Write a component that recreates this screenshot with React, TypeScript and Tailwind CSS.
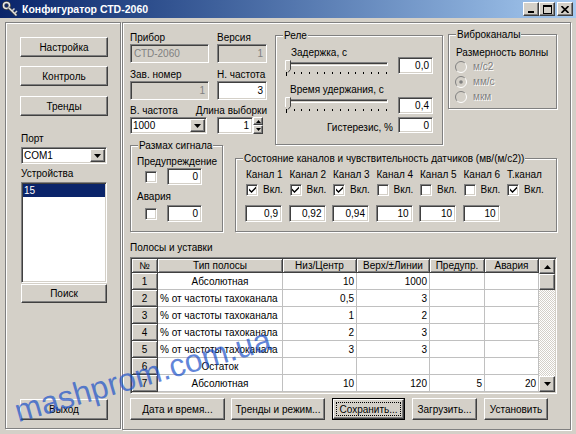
import React from "react";

const raised =
  "border border-t-white border-l-white border-r-[#404040] border-b-[#404040] shadow-[inset_-1px_-1px_0_#808080]";
const sunken =
  "border border-t-[#808080] border-l-[#808080] border-r-white border-b-white shadow-[inset_1px_1px_0_#404040,inset_-1px_-1px_0_#d4d0c8]";
const etched = "border border-[#808080] shadow-[inset_1px_1px_0_#fff,1px_1px_0_#fff]";

function Button({ children, className = "" }: { children: React.ReactNode; className?: string }) {
  return <div className={`${raised} flex items-center justify-center bg-[#d4d0c8] ${className}`}>{children}</div>;
}

function FocusButton({ children, className = "" }: { children: React.ReactNode; className?: string }) {
  return (
    <div className={`border border-black ${className}`}>
      <div className={`${raised} flex h-full w-full items-center justify-center bg-[#d4d0c8] p-[2px]`}>
        <span className="flex h-full w-full items-center justify-center border border-dotted border-black">{children}</span>
      </div>
    </div>
  );
}

function Edit({
  children,
  className = "",
  disabled,
  left,
}: {
  children?: React.ReactNode;
  className?: string;
  disabled?: boolean;
  left?: boolean;
}) {
  return (
    <div
      className={`${sunken} flex shrink-0 items-center px-[3px] ${left ? "justify-start" : "justify-end"} ${
        disabled ? "bg-[#d4d0c8] text-[#808080]" : "bg-white"
      } ${className}`}
    >
      {children}
    </div>
  );
}

function Arrow({ up }: { up?: boolean }) {
  return (
    <svg width="7" height="4" viewBox="0 0 7 4">
      <path d={up ? "M0 4h7L3.5 0z" : "M0 0h7L3.5 4z"} fill="black" />
    </svg>
  );
}

function Combo({ value, className = "" }: { value: string; className?: string }) {
  return (
    <div className={`${sunken} flex shrink-0 items-stretch bg-white p-[1px] ${className}`}>
      <span className="flex flex-1 items-center pl-[1px]">{value}</span>
      <span className={`${raised} flex w-[15px] items-center justify-center bg-[#d4d0c8]`}>
        <Arrow />
      </span>
    </div>
  );
}

function Check({ checked }: { checked?: boolean }) {
  return (
    <span className={`${sunken} flex h-[12px] w-[12px] shrink-0 items-center justify-center bg-white`}>
      {checked && (
        <svg width="7" height="7" viewBox="0 0 7 7">
          <path d="M0 2.5 L2.5 5 L7 0.5 L7 2.5 L2.5 7 L0 4.5Z" fill="black" />
        </svg>
      )}
    </span>
  );
}

function Radio({ checked }: { checked?: boolean }) {
  return (
    <svg width="12" height="12" viewBox="0 0 12 12" className="shrink-0">
      <circle cx="6" cy="6" r="5" fill="#d4d0c8" />
      <path d="M2.11 9.89 A5.5 5.5 0 0 1 9.89 2.11" stroke="#808080" fill="none" />
      <path d="M9.89 2.11 A5.5 5.5 0 0 1 2.11 9.89" stroke="#fff" fill="none" />
      {checked && <circle cx="6" cy="6" r="1.8" fill="#808080" />}
    </svg>
  );
}

function Group({
  title,
  className = "",
  children,
}: {
  title: string;
  className?: string;
  children: React.ReactNode;
}) {
  return (
    <div className={`relative shrink-0 ${etched} ${className}`}>
      <span className="absolute -top-[7px] left-[7px] whitespace-nowrap bg-[#d4d0c8] px-[1px]">{title}</span>
      {children}
    </div>
  );
}

function Slider() {
  return (
    <div className="relative h-[17px] w-[104px]">
      <div className="mt-[3px] h-[4px] w-[103px] border border-t-[#808080] border-l-[#808080] border-r-white border-b-white shadow-[inset_1px_1px_0_#404040]" />
      <div className="ml-[1px] mt-[6px] flex w-[101px] items-start justify-between">
        {Array.from({ length: 14 }).map((_, i) => (
          <span key={i} className={`w-px bg-black ${i === 0 ? "h-[4px]" : "h-[2px]"}`} />
        ))}
      </div>
      <svg className="absolute left-0 top-[1px]" width="6" height="13" viewBox="0 0 6 13">
        <path d="M0.5 0.5 H5.5 V9.5 L3 12.5 L0.5 9.5 Z" fill="#d4d0c8" />
        <path d="M0.5 10 V0.5 H5" stroke="#fff" fill="none" />
        <path d="M5.5 0.5 V9.5 L3 12.5" stroke="#404040" fill="none" />
      </svg>
    </div>
  );
}

function TitleBar() {
  return (
    <div className="flex h-[18px] items-center bg-linear-to-r from-[#0a246a] to-[#a6caf0] pl-[2px] pr-[3px]">
      <svg width="16" height="16" viewBox="0 0 16 16">
        <circle cx="4.5" cy="4.5" r="3" fill="none" stroke="#404040" strokeWidth="3" />
        <circle cx="4.5" cy="4.5" r="3" fill="none" stroke="#e8e8e8" strokeWidth="1.5" />
        <path d="M6.5 6.5 L14.5 14.5" stroke="#404040" strokeWidth="3" />
        <path d="M6.5 6.5 L14.5 14.5" stroke="#e8e8e8" strokeWidth="1.5" />
        <path d="M10 10 L12.5 7.5 M12.5 12.5 L15 10" stroke="#d0d0d0" strokeWidth="1.5" />
      </svg>
      <span className="ml-[4px] text-[10.5px] font-bold text-white">Конфигуратор СТD-2060</span>
      <div className="ml-auto flex">
        <span className={`${raised} flex h-[14px] w-[16px] items-end justify-center bg-[#d4d0c8] pb-[2px]`}>
          <span className="h-[2px] w-[6px] bg-black" />
        </span>
        <span className={`${raised} flex h-[14px] w-[16px] items-center justify-center bg-[#d4d0c8]`}>
          <span className="h-[9px] w-[9px] border border-t-2 border-black" />
        </span>
        <span className={`${raised} ml-[2px] flex h-[14px] w-[16px] items-center justify-center bg-[#d4d0c8]`}>
          <svg width="8" height="7" viewBox="0 0 8 7">
            <path d="M0.5 0 L7.5 7 M7.5 0 L0.5 7" stroke="black" strokeWidth="1.6" />
          </svg>
        </span>
      </div>
    </div>
  );
}

function LeftPanel() {
  return (
    <div className={`flex h-[407px] w-[116px] shrink-0 flex-col ${etched}`}>
      <Button className="ml-[14px] mt-[14px] h-[20px] w-[88px]">Настройка</Button>
      <Button className="ml-[14px] mt-[9px] h-[20px] w-[88px]">Контроль</Button>
      <Button className="ml-[14px] mt-[10px] h-[20px] w-[88px]">Тренды</Button>
      <span className="ml-[15px] mt-[16px]">Порт</span>
      <Combo className="ml-[15px] mt-[2px] h-[17px] w-[86px]" value="COM1" />
      <span className="ml-[15px] mt-[3px]">Устройства</span>
      <div className={`${sunken} ml-[15px] mt-[2px] h-[101px] w-[86px] bg-white p-[1px]`}>
        <div className="h-[13px] bg-[#0a246a] pl-[1px] text-white">15</div>
      </div>
      <Button className="ml-[15px] mt-[1px] h-[19px] w-[86px]">Поиск</Button>
      <Button className="ml-[14px] mt-[96px] h-[21px] w-[88px]">Выход</Button>
    </div>
  );
}

const channels = ["Канал 1", "Канал 2", "Канал 3", "Канал 4", "Канал 5", "Канал 6", "Т.канал"];
const channelOn = [true, true, true, false, false, false, true];
const sensitivity = ["0,9", "0,92", "0,94", "10", "10", "10"];

const bands = [
  { n: "1", type: "Абсолютная", center: true, low: "10", high: "1000", warn: "", alarm: "" },
  { n: "2", type: "% от частоты тахоканала", center: false, low: "0,5", high: "3", warn: "", alarm: "" },
  { n: "3", type: "% от частоты тахоканала", center: false, low: "1", high: "2", warn: "", alarm: "" },
  { n: "4", type: "% от частоты тахоканала", center: false, low: "2", high: "3", warn: "", alarm: "" },
  { n: "5", type: "% от частоты тахоканала", center: false, low: "3", high: "3", warn: "", alarm: "" },
  { n: "6", type: "Остаток", center: true, low: "", high: "", warn: "", alarm: "" },
  { n: "7", type: "Абсолютная", center: true, low: "10", high: "120", warn: "5", alarm: "20" },
];

const fixedCell =
  "flex shrink-0 items-center justify-center bg-[#d4d0c8] border-r border-b border-[#404040] shadow-[inset_1px_1px_0_#fff,inset_-1px_-1px_0_#808080]";
const dataCell = "flex shrink-0 items-center border-r border-b border-[#c0c0c0] px-[2px] whitespace-nowrap overflow-hidden";

function BandsGrid() {
  const headers = ["Тип полосы", "Низ/Центр", "Верх/±Линии", "Предупр.", "Авария"];
  const widths = ["w-[125px]", "w-[74px]", "w-[73px]", "w-[55px]", "w-[54px]"];
  return (
    <div className={`${sunken} mt-[3px] flex h-[137px] w-[427px] shrink-0 bg-white p-[1px]`}>
      <div className="flex w-[407px] flex-col">
        <div className="flex h-[14px]">
          <div className={`${fixedCell} w-[26px]`}>№</div>
          {headers.map((h, i) => (
            <div key={h} className={`${fixedCell} ${widths[i]}`}>
              {h}
            </div>
          ))}
        </div>
        {bands.map((b) => (
          <div key={b.n} className="flex h-[17px]">
            <div className={`${fixedCell} w-[26px]`}>{b.n}</div>
            <div className={`${dataCell} w-[125px] ${b.center ? "justify-center" : "justify-start"}`}>{b.type}</div>
            <div className={`${dataCell} w-[74px] justify-end`}>{b.low}</div>
            <div className={`${dataCell} w-[73px] justify-end`}>{b.high}</div>
            <div className={`${dataCell} w-[55px] justify-end`}>{b.warn}</div>
            <div className={`${dataCell} w-[54px] justify-end`}>{b.alarm}</div>
          </div>
        ))}
      </div>
      <div className="flex w-[16px] flex-col">
        <span className={`${raised} flex h-[15px] items-center justify-center bg-[#d4d0c8]`}>
          <Arrow up />
        </span>
        <span className={`${raised} h-[16px] bg-[#d4d0c8]`} />
        <span className="flex-1 bg-[repeating-conic-gradient(#d4d0c8_0%_25%,#ffffff_0%_50%)] bg-[length:2px_2px]" />
        <span className={`${raised} flex h-[16px] items-center justify-center bg-[#d4d0c8]`}>
          <Arrow />
        </span>
      </div>
    </div>
  );
}

function RightPanel() {
  return (
    <div className={`ml-[1px] flex h-[408px] w-[449px] shrink-0 flex-col pl-[7px] ${etched}`}>
      <div className="flex items-start">
        <div className="mt-[8px] flex w-[137px] shrink-0 flex-col">
          <div className="flex gap-[8px]">
            <span className="w-[79px]">Прибор</span>
            <span>Версия</span>
          </div>
          <div className="flex gap-[8px]">
            <Edit className="h-[19px] w-[79px]" disabled left>
              СТD-2060
            </Edit>
            <Edit className="h-[19px] w-[50px]" disabled>
              1
            </Edit>
          </div>
          <div className="mt-[5px] flex gap-[8px]">
            <span className="w-[79px]">Зав. номер</span>
            <span>Н. частота</span>
          </div>
          <div className="flex gap-[8px]">
            <Edit className="h-[19px] w-[79px]" disabled>
              1
            </Edit>
            <Edit className="h-[19px] w-[50px]">3</Edit>
          </div>
          <div className="mt-[4px] flex justify-between">
            <span>В. частота</span>
            <span>Длина выборки</span>
          </div>
          <div className="flex items-start">
            <Combo className="h-[17px] w-[77px]" value="1000" />
            <Edit className="ml-[10px] h-[17px] w-[36px]">1</Edit>
            <div className="flex h-[17px] w-[10px] flex-col">
              <span className={`${raised} flex h-[8px] items-center justify-center bg-[#d4d0c8]`}>
                <svg width="5" height="3" viewBox="0 0 5 3">
                  <path d="M0 3h5L2.5 0z" fill="black" />
                </svg>
              </span>
              <span className={`${raised} flex h-[9px] items-center justify-center bg-[#d4d0c8]`}>
                <svg width="5" height="3" viewBox="0 0 5 3">
                  <path d="M0 0h5L2.5 3z" fill="black" />
                </svg>
              </span>
            </div>
          </div>
        </div>

        <Group title="Реле" className="ml-[8px] mt-[12px] h-[110px] w-[168px]">
          <div className="flex flex-col pl-[9px]">
            <div className="flex h-[47px]">
              <div className="flex w-[104px] flex-col">
                <span className="ml-[6px] mt-[10px]">Задержка, с</span>
                <Slider />
              </div>
              <Edit className="ml-[9px] mt-[21px] h-[17px] w-[35px]">0,0</Edit>
            </div>
            <div className="flex h-[34px]">
              <div className="flex w-[104px] flex-col">
                <span className="ml-[5px]">Время удержания, с</span>
                <Slider />
              </div>
              <Edit className="ml-[9px] mt-[14px] h-[17px] w-[35px]">0,4</Edit>
            </div>
            <div className="flex items-start">
              <span className="mt-[4px] w-[108px] text-right">Гистерезис, %</span>
              <Edit className="ml-[5px] h-[16px] w-[35px]">0</Edit>
            </div>
          </div>
        </Group>

        <Group title="Виброканалы" className="ml-[5px] mt-[11px] h-[75px] w-[109px]">
          <div className="flex flex-col pl-[7px] pt-[11px]">
            <span>Размерность волны</span>
            {["м/с2", "мм/с", "мкм"].map((l, i) => (
              <div key={l} className="-ml-[1px] flex h-[15px] items-center">
                <Radio checked={i === 1} />
                <span className="ml-[6px] text-[#808080] [text-shadow:1px_1px_0_#fff]">{l}</span>
              </div>
            ))}
          </div>
        </Group>
      </div>

      <div className="flex items-start">
        <Group title="Размах сигнала" className="h-[87px] w-[93px]">
          <div className="flex flex-col pl-[6px] pt-[9px]">
            <span>Предупреждение</span>
            <div className="flex items-center">
              <span className="ml-[8px]">
                <Check />
              </span>
              <Edit className="ml-[10px] h-[17px] w-[35px]">0</Edit>
            </div>
            <span className="mt-[5px]">Авария</span>
            <div className="mt-[2px] flex items-center">
              <span className="ml-[8px]">
                <Check />
              </span>
              <Edit className="ml-[10px] h-[17px] w-[35px]">0</Edit>
            </div>
          </div>
        </Group>

        <Group
          title="Состояние каналов и чувствительность датчиков (мв/(м/с2))"
          className="ml-[12px] mt-[13px] h-[74px] w-[322px]"
        >
          <div className="flex flex-col pl-[10px] pt-[9px]">
            <div className="flex">
              {channels.map((c) => (
                <span key={c} className="w-[43.5px] shrink-0">
                  {c}
                </span>
              ))}
            </div>
            <div className="mt-[2px] flex">
              {channels.map((c, i) => (
                <div key={c} className="flex h-[13px] w-[43.5px] shrink-0 items-center">
                  <Check checked={channelOn[i]} />
                  <span className="ml-[5px]">Вкл.</span>
                </div>
              ))}
            </div>
            <div className="-ml-[1px] mt-[9px] flex">
              {sensitivity.map((v, i) => (
                <div key={i} className="w-[43.5px] shrink-0">
                  <Edit className="h-[17px] w-[37px]">{v}</Edit>
                </div>
              ))}
            </div>
          </div>
        </Group>
      </div>

      <span className="mt-[9px]">Полосы и уставки</span>
      <BandsGrid />

      <div className="mt-[4px] flex">
        <Button className="h-[22px] w-[95px]">Дата и время...</Button>
        <Button className="ml-[6px] h-[22px] w-[94px]">Тренды и режим...</Button>
        <FocusButton className="ml-[7px] h-[22px] w-[73px]">Сохранить...</FocusButton>
        <Button className="ml-[7px] h-[22px] w-[65px]">Загрузить...</Button>
        <Button className="ml-[7px] h-[22px] w-[64px]">Установить</Button>
      </div>
    </div>
  );
}

export default function App() {
  return (
    <div className="relative h-[434px] w-[576px] select-none overflow-hidden whitespace-nowrap bg-[#d4d0c8] font-['Liberation_Sans',Arial,sans-serif] text-[10px] leading-[13px] text-black">
      <TitleBar />
      <div className="flex pl-[5px] pt-[4px]">
        <LeftPanel />
        <RightPanel />
      </div>
      <div className="pointer-events-none absolute left-[20px] top-[394px] origin-bottom-left -rotate-[16deg] text-[32px] leading-[34px] text-[#1a50c8]/70">
        mashprom.com.ua
      </div>
    </div>
  );
}
